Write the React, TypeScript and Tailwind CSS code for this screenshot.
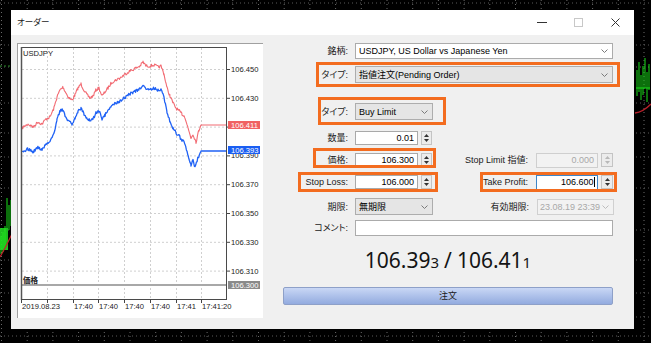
import React from "react";

type P = [number, number];

const redKP: P[] = [
  [22, 128], [28, 124], [33, 127], [38, 122], [42, 124], [46, 119], [50, 117], [54, 108], [57, 97], [60, 90], [63, 87],
  [66, 93], [69, 98], [72, 100], [75, 95], [78, 88], [81, 84], [84, 90], [87, 95], [90, 98], [93, 96], [96, 90],
  [99, 88], [102, 96], [105, 92], [108, 88], [112, 82], [116, 80], [120, 78], [124, 75], [128, 72], [132, 70],
  [136, 68], [140, 66], [143, 62], [146, 66], [150, 66], [154, 65], [158, 67], [161, 66], [164, 74], [167, 88],
  [170, 96], [173, 103], [176, 108], [179, 111], [182, 114], [185, 117], [188, 128], [191, 138], [193, 134],
  [196, 142], [199, 130], [201, 125], [227, 125],
];

const blueKP: P[] = [
  [22, 153], [28, 149], [33, 152], [38, 147], [42, 150], [46, 144], [50, 142], [54, 133], [57, 120], [60, 111], [63, 110],
  [66, 118], [69, 121], [72, 124], [75, 118], [78, 111], [81, 108], [84, 114], [87, 118], [90, 121], [93, 119], [96, 113],
  [99, 111], [102, 119], [105, 115], [108, 111], [112, 105], [116, 103], [120, 101], [124, 98], [128, 95], [132, 93],
  [136, 91], [140, 89], [143, 85], [146, 89], [150, 89], [154, 88], [158, 90], [161, 89], [164, 98], [167, 112],
  [170, 121], [173, 128], [176, 133], [179, 136], [182, 140], [185, 143], [188, 155], [191, 166], [193, 160],
  [195, 168], [198, 158], [201, 151], [227, 151],
];

function jag(kp: P[], seed: number, amp: number): string {
  let s = seed;
  const rnd = () => {
    s = (s * 16807) % 2147483647;
    return s / 2147483647;
  };
  const pts: string[] = [];
  for (let i = 0; i < kp.length - 1; i++) {
    const [x0, y0] = kp[i];
    const [x1, y1] = kp[i + 1];
    for (let x = x0; x < x1; x += 0.7) {
      const t = (x - x0) / (x1 - x0);
      let y = y0 + (y1 - y0) * t;
      if (x < 200) y += (rnd() - 0.5) * amp;
      pts.push(`${x.toFixed(1)},${y.toFixed(1)}`);
    }
  }
  const last = kp[kp.length - 1];
  pts.push(`${last[0]},${last[1]}`);
  return pts.join(" ");
}

const priceY = (p: number) => 69 + (106.45 - p) * 1440;

function Background() {
  const vx: number[] = [];
  for (let x = 1.5; x < 651; x += 25.7) vx.push(x);
  const hy = [3, 45, 67, 103, 133, 157, 188, 230, 260, 293, 317, 336];
  return (
    <svg className="absolute inset-0" width={651} height={343} viewBox="0 0 651 343">
      <rect width={651} height={343} fill="#000" />
      {vx.map((x) => (
        <line key={"v" + x} x1={x} y1={0} x2={x} y2={343} stroke="#6a6a6a" strokeWidth={1} strokeDasharray="1 3" />
      ))}
      {hy.map((y) => (
        <line key={"h" + y} x1={0} y1={y} x2={651} y2={y} stroke="#5a5a5a" strokeWidth={1} strokeDasharray="1 3" />
      ))}
      <line x1={0} y1={66} x2={10} y2={66} stroke="#2a8a2a" strokeDasharray="2 2" />
      <g stroke="#19e019" strokeWidth={1}>
        <line x1={7} y1={198} x2={7} y2={228} />
        <line x1={9} y1={205} x2={9} y2={230} />
        <line x1={11} y1={200} x2={11} y2={226} />
        <line x1={5} y1={226} x2={5} y2={248} />
        <line x1={3} y1={232} x2={3} y2={252} />
        <line x1={1} y1={236} x2={1} y2={254} />
      </g>
      <rect x={0} y={228} width={8} height={22} fill="#22e022" opacity={0.85} />
      <path d="M0 257 L5 248 L12 234" stroke="#c0232a" strokeWidth={1.2} fill="none" />
      <g stroke="#19e019" strokeWidth={1}>
        <line x1={637} y1={70} x2={637} y2={96} />
        <line x1={639} y1={62} x2={639} y2={92} />
        <line x1={641} y1={75} x2={641} y2={100} />
        <line x1={643} y1={66} x2={643} y2={95} />
        <line x1={645} y1={58} x2={645} y2={88} />
        <line x1={647} y1={72} x2={647} y2={102} />
        <line x1={649} y1={64} x2={649} y2={90} />
        <line x1={636} y1={88} x2={650} y2={88} />
      </g>
      <path d="M635 113 Q643 112 651 104" stroke="#b8202a" strokeWidth={1.3} fill="none" />
    </svg>
  );
}

function Chart() {
  const levels = [106.45, 106.43, 106.41, 106.39, 106.37, 106.35, 106.33, 106.31];
  const labelLevels = [106.45, 106.43, 106.39, 106.37, 106.35, 106.33, 106.31];
  const ticks = [21, 47, 73, 98, 124, 150, 176, 201];
  const times = ["2019.08.23", "", "17:40", "17:40", "17:40", "17:40", "17:41", "17:41:20"];
  const font = "'Liberation Sans', Arial, sans-serif";
  return (
    <svg width={246} height={275} viewBox="17 43 246 275" className="block">
      <rect x={17} y={43} width={246} height={275} fill="#fff" />
      <line x1={17} y1={43.5} x2={263} y2={43.5} stroke="#a0a0a0" />
      <line x1={17.5} y1={43} x2={17.5} y2={318} stroke="#a0a0a0" />
      {levels.map((p) => (
        <line key={p} x1={22} y1={priceY(p) + 0.5} x2={226} y2={priceY(p) + 0.5} stroke="#cfcfcf" strokeDasharray="2 2" />
      ))}
      {ticks.slice(1).map((x) => (
        <line key={x} x1={x + 0.5} y1={48} x2={x + 0.5} y2={298} stroke="#cfcfcf" strokeDasharray="2 2" />
      ))}
      <line x1={22} y1={285} x2={226} y2={285} stroke="#a8a8a8" strokeWidth={2} />
      <polyline points={jag(redKP, 7, 3)} fill="none" stroke="#f26a72" strokeWidth={1.1} strokeLinejoin="round" />
      <polyline points={jag(blueKP, 31, 3)} fill="none" stroke="#2062f5" strokeWidth={1.3} strokeLinejoin="round" />
      <rect x={21.5} y={47.5} width={205} height={252} fill="none" stroke="#4a4a4a" />
      <line x1={21.5} y1={47} x2={21.5} y2={300} stroke="#555" strokeWidth={1.5} />
      {ticks.map((x) => (
        <line key={"t" + x} x1={x + 0.5} y1={299} x2={x + 0.5} y2={303} stroke="#444" />
      ))}
      {levels.map((p) => (
        <line key={"pt" + p} x1={227} y1={priceY(p) + 0.5} x2={230} y2={priceY(p) + 0.5} stroke="#444" />
      ))}
      <g fontFamily={font} fontSize={7.6} fill="#222">
        {labelLevels.map((p) => (
          <text key={"l" + p} x={231} y={priceY(p) + 3}>
            {p.toFixed(3)}
          </text>
        ))}
        {times.map((t, i) =>
          t ? (
            <text key={"tm" + i} x={ticks[i] + 1} y={309}>
              {t}
            </text>
          ) : null
        )}
        <text x={23} y={55.5}>USDJPY</text>
      </g>
      <text x={23} y={283} fontSize={7.5} fontWeight={700} fill="#222" fontFamily="'Noto Sans CJK JP', sans-serif">
        価格
      </text>
      <rect x={228} y={121} width={32} height={8} fill="#f06262" />
      <text x={231} y={127.6} fontSize={7.6} fill="#fff" fontFamily={font}>106.411</text>
      <rect x={228} y={146} width={32} height={8} fill="#1a5ef2" />
      <text x={231} y={152.6} fontSize={7.6} fill="#fff" fontFamily={font}>106.393</text>
      <rect x={228} y={281} width={32} height={8} fill="#8a8a8a" />
      <text x={231} y={287.6} fontSize={7.6} fill="#fff" fontFamily={font}>106.300</text>
    </svg>
  );
}

function Chevron({ color = "#7a7a7a" }: { color?: string }) {
  return (
    <svg width={7} height={4} viewBox="0 0 7 4" className="shrink-0">
      <polyline points="0.5,0.5 3.5,3.5 6.5,0.5" fill="none" stroke={color} strokeWidth={1} />
    </svg>
  );
}

function Spinner({ disabled = false, w = "w-[11px]" }: { disabled?: boolean; w?: string }) {
  const c = disabled ? "#b8b8b8" : "#333";
  return (
    <div className={`ml-[3px] h-[14px] ${w} flex flex-col items-center justify-center gap-[2px] border border-[#c4c4c4] bg-[#ececec]`}>
      <svg width={5} height={3} viewBox="0 0 5 3">
        <polygon points="0,3 2.5,0 5,3" fill={c} />
      </svg>
      <svg width={5} height={3} viewBox="0 0 5 3">
        <polygon points="0,0 2.5,3 5,0" fill={c} />
      </svg>
    </div>
  );
}

const LBL = "w-[85px] shrink-0 text-right text-[#1a1a1a] [font-feature-settings:'palt']";
const RLBL = "w-[96px] shrink-0 text-right text-[#1a1a1a] [font-feature-settings:'palt']";

function Form() {
  return (
    <div className="flex flex-col w-[371px] pt-[8px] text-[9px] leading-[12px]">
      <div className="flex items-center h-[16px]">
        <div className={LBL}>銘柄:</div>
        <div className="ml-[7px] w-[258px] h-[16px] flex items-center justify-between pl-[3px] pr-[4px] bg-white border border-[#ababab]">
          <span>USDJPY, US Dollar vs Japanese Yen</span>
          <Chevron />
        </div>
      </div>
      <div className="flex items-center h-[17px] mt-[7px]">
        <div className={LBL}>タイプ:</div>
        <div className="ml-[7px] w-[258px] h-[17px] flex items-center justify-between pl-[3px] pr-[4px] bg-[#e5e5e5] border border-[#adadad]">
          <span className="[font-feature-settings:'palt']">指値注文(Pending Order)</span>
          <Chevron />
        </div>
      </div>
      <div className="flex items-center h-[17px] mt-[20px]">
        <div className={LBL}>タイプ:</div>
        <div className="ml-[7px] w-[78px] h-[17px] flex items-center justify-between pl-[3px] pr-[4px] bg-[#e5e5e5] border border-[#adadad]">
          <span>Buy Limit</span>
          <Chevron />
        </div>
      </div>
      <div className="flex items-center h-[14px] mt-[11px]">
        <div className={LBL}>数量:</div>
        <div className="ml-[7px] w-[63px] h-[14px] flex items-center justify-end pr-[3px] bg-white border border-[#a9a9a9]">0.01</div>
        <Spinner />
      </div>
      <div className="flex items-center h-[14px] mt-[8px]">
        <div className={LBL}>価格:</div>
        <div className="ml-[7px] w-[63px] h-[14px] flex items-center justify-end pr-[3px] bg-white border border-[#a9a9a9]">106.300</div>
        <Spinner />
        <div className={RLBL}>Stop Limit 指値:</div>
        <div className="ml-[8px] w-[62px] h-[15px] flex items-center justify-end pr-[3px] bg-[#f2f2f2] border border-[#cfcfcf] text-[#a8a8a8]">0.000</div>
        <Spinner disabled w="w-[12px]" />
      </div>
      <div className="flex items-center h-[14px] mt-[8px]">
        <div className={LBL}>Stop Loss:</div>
        <div className="ml-[7px] w-[63px] h-[14px] flex items-center justify-end pr-[3px] bg-white border border-[#a9a9a9]">106.000</div>
        <Spinner />
        <div className={RLBL}>Take Profit:</div>
        <div className="ml-[8px] w-[62px] h-[15px] flex items-center justify-end pr-[2px] bg-white border border-[#3f86c8]">
          <span>106.600</span>
          <span className="ml-[0.5px] w-[1px] h-[10px] bg-black" />
        </div>
        <Spinner w="w-[12px]" />
      </div>
      <div className="flex items-center h-[17px] mt-[9px]">
        <div className={LBL}>期限:</div>
        <div className="ml-[7px] w-[78px] h-[17px] flex items-center justify-between pl-[3px] pr-[4px] bg-[#e5e5e5] border border-[#adadad]">
          <span>無期限</span>
          <Chevron />
        </div>
        <div className="w-[96px] shrink-0 text-right text-[#1a1a1a]">有効期限:</div>
        <div className="ml-[8px] w-[77px] h-[16px] flex items-center justify-between pl-[2px] pr-[4px] bg-[#f2f2f2] border border-[#d0d0d0] text-[#a8a8a8]">
          <span>23.08.19 23:39</span>
          <Chevron color="#bdbdbd" />
        </div>
      </div>
      <div className="flex items-center h-[16px] mt-[5px]">
        <div className={LBL}>コメント:</div>
        <div className="ml-[7px] w-[258px] h-[16px] bg-white border border-[#ababab]" />
      </div>
      <div className="mt-[12px] ml-[20px] w-[330px] h-[24px] flex justify-center items-baseline font-['Noto_Sans',sans-serif] text-[21px] leading-[24px] text-[#141414]">
        <span>106.39</span>
        <span className="text-[15px]">3</span>
        <span className="mx-[5px]">/</span>
        <span>106.41</span>
        <span className="text-[15px]">1</span>
      </div>
      <div className="mt-[15px] ml-[20px] w-[330px] h-[18px] flex items-center justify-center rounded-[2px] border border-[#8ea0c8] bg-gradient-to-b from-[#c9d7f5] to-[#93abdf] text-[#1a1a1a]">
        注文
      </div>
    </div>
  );
}

export default function App() {
  return (
    <div className="relative w-[651px] h-[343px] overflow-hidden bg-black pt-[10px] pl-[11px] font-['Liberation_Sans','Noto_Sans_CJK_JP',sans-serif]">
      <Background />
      <div className="relative w-[623px] h-[319px] bg-[#f0f0f0] flex flex-col">
        <div className="h-[25px] bg-white flex items-center pl-[6px] shrink-0">
          <span className="text-[8.5px] text-[#1a1a1a] [font-feature-settings:'palt']">オーダー</span>
          <div className="ml-auto flex items-center pr-[14px]">
            <svg width={10} height={9} viewBox="0 0 10 9">
              <line x1={0} y1={4.5} x2={10} y2={4.5} stroke="#333" />
            </svg>
            <svg width={9} height={9} viewBox="0 0 9 9" className="ml-[27px]">
              <rect x={0.5} y={0.5} width={8} height={8} fill="none" stroke="#c8c8c8" />
            </svg>
            <svg width={9} height={9} viewBox="0 0 9 9" className="ml-[28px]">
              <path d="M0.5 0.5 L8.5 8.5 M8.5 0.5 L0.5 8.5" stroke="#333" strokeWidth={1} />
            </svg>
          </div>
        </div>
        <div className="flex flex-1">
          <div className="ml-[6px] mt-[8px] w-[246px] h-[275px] shrink-0">
            <Chart />
          </div>
          <Form />
        </div>
        <div className="absolute left-[305px] top-[52px] w-[304px] h-[25px] border-[3px] border-[#f36c1f]" />
        <div className="absolute left-[307px] top-[87px] w-[128px] h-[28px] border-[3px] border-[#f36c1f]" />
        <div className="absolute left-[302px] top-[138px] w-[123px] h-[20px] border-[3px] border-[#f36c1f]" />
        <div className="absolute left-[287px] top-[162px] w-[140px] h-[20px] border-[3px] border-[#f36c1f]" />
        <div className="absolute left-[469px] top-[162px] w-[137px] h-[20px] border-[3px] border-[#f36c1f]" />
      </div>
    </div>
  );
}
